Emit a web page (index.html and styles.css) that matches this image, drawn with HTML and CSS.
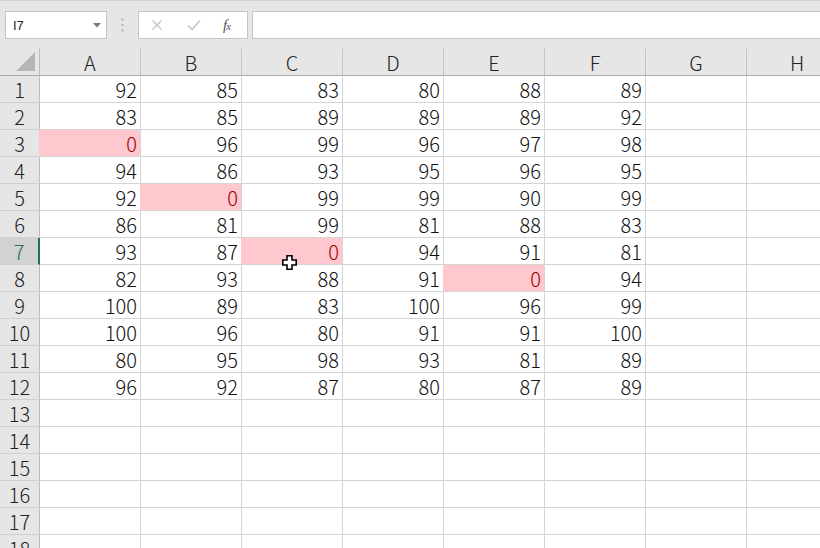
FILE: index.html
```html
<!DOCTYPE html>
<html lang="ja">
<head>
<meta charset="utf-8">
<title>Sheet</title>
<link rel="stylesheet" href="styles.css">
</head>
<body>
<div class="app">
  <div class="toolbar">
    <div class="namebox">
      <span class="namebox-text">I7</span>
      <svg class="namebox-arrow" width="8" height="5" viewBox="0 0 8 5"><path d="M0 0H8L4 4.5Z" fill="#7a7a7a"/></svg>
    </div>
    <div class="dots">
      <svg width="3" height="14" viewBox="0 0 3 14"><rect x="0.5" y="0.5" width="2" height="2" fill="#b0b0b0"/><rect x="0.5" y="6" width="2" height="2" fill="#b0b0b0"/><rect x="0.5" y="11.5" width="2" height="2" fill="#b0b0b0"/></svg>
    </div>
    <div class="fxbox">
      <svg class="fx-icon" width="12" height="12" viewBox="0 0 12 12"><path d="M1.5 1.5L10.5 10.5M10.5 1.5L1.5 10.5" stroke="#c4c4c4" stroke-width="1.4" fill="none"/></svg>
      <svg class="fx-icon" width="14" height="12" viewBox="0 0 14 12"><path d="M1 6.5L5 10.5L13 1.5" stroke="#c4c4c4" stroke-width="1.6" fill="none"/></svg>
      <span class="fx-text"><i>f</i><small>x</small></span>
    </div>
    <div class="formula"></div>
  </div>

  <div class="sheet">
    <div class="grid">
      <div class="corner"><svg width="19" height="19" viewBox="0 0 19 19"><path d="M19 0V19H0Z" fill="#b6b6b6"/></svg></div>
      <div class="colhead">A</div><div class="colhead">B</div><div class="colhead">C</div><div class="colhead">D</div><div class="colhead">E</div><div class="colhead">F</div><div class="colhead">G</div><div class="colhead">H</div>

      <div class="rowhead">1</div><div class="cell">92</div><div class="cell">85</div><div class="cell">83</div><div class="cell">80</div><div class="cell">88</div><div class="cell">89</div><div class="cell"></div><div class="cell"></div>
      <div class="rowhead">2</div><div class="cell">83</div><div class="cell">85</div><div class="cell">89</div><div class="cell">89</div><div class="cell">89</div><div class="cell">92</div><div class="cell"></div><div class="cell"></div>
      <div class="rowhead">3</div><div class="cell bad">0</div><div class="cell">96</div><div class="cell">99</div><div class="cell">96</div><div class="cell">97</div><div class="cell">98</div><div class="cell"></div><div class="cell"></div>
      <div class="rowhead">4</div><div class="cell">94</div><div class="cell">86</div><div class="cell">93</div><div class="cell">95</div><div class="cell">96</div><div class="cell">95</div><div class="cell"></div><div class="cell"></div>
      <div class="rowhead">5</div><div class="cell">92</div><div class="cell bad">0</div><div class="cell">99</div><div class="cell">99</div><div class="cell">90</div><div class="cell">99</div><div class="cell"></div><div class="cell"></div>
      <div class="rowhead">6</div><div class="cell">86</div><div class="cell">81</div><div class="cell">99</div><div class="cell">81</div><div class="cell">88</div><div class="cell">83</div><div class="cell"></div><div class="cell"></div>
      <div class="rowhead active">7</div><div class="cell">93</div><div class="cell">87</div><div class="cell bad">0</div><div class="cell">94</div><div class="cell">91</div><div class="cell">81</div><div class="cell"></div><div class="cell"></div>
      <div class="rowhead">8</div><div class="cell">82</div><div class="cell">93</div><div class="cell">88</div><div class="cell">91</div><div class="cell bad">0</div><div class="cell">94</div><div class="cell"></div><div class="cell"></div>
      <div class="rowhead">9</div><div class="cell">100</div><div class="cell">89</div><div class="cell">83</div><div class="cell">100</div><div class="cell">96</div><div class="cell">99</div><div class="cell"></div><div class="cell"></div>
      <div class="rowhead">10</div><div class="cell">100</div><div class="cell">96</div><div class="cell">80</div><div class="cell">91</div><div class="cell">91</div><div class="cell">100</div><div class="cell"></div><div class="cell"></div>
      <div class="rowhead">11</div><div class="cell">80</div><div class="cell">95</div><div class="cell">98</div><div class="cell">93</div><div class="cell">81</div><div class="cell">89</div><div class="cell"></div><div class="cell"></div>
      <div class="rowhead">12</div><div class="cell">96</div><div class="cell">92</div><div class="cell">87</div><div class="cell">80</div><div class="cell">87</div><div class="cell">89</div><div class="cell"></div><div class="cell"></div>
      <div class="rowhead">13</div><div class="cell"></div><div class="cell"></div><div class="cell"></div><div class="cell"></div><div class="cell"></div><div class="cell"></div><div class="cell"></div><div class="cell"></div>
      <div class="rowhead">14</div><div class="cell"></div><div class="cell"></div><div class="cell"></div><div class="cell"></div><div class="cell"></div><div class="cell"></div><div class="cell"></div><div class="cell"></div>
      <div class="rowhead">15</div><div class="cell"></div><div class="cell"></div><div class="cell"></div><div class="cell"></div><div class="cell"></div><div class="cell"></div><div class="cell"></div><div class="cell"></div>
      <div class="rowhead">16</div><div class="cell"></div><div class="cell"></div><div class="cell"></div><div class="cell"></div><div class="cell"></div><div class="cell"></div><div class="cell"></div><div class="cell"></div>
      <div class="rowhead">17</div><div class="cell"></div><div class="cell"></div><div class="cell"></div><div class="cell"></div><div class="cell"></div><div class="cell"></div><div class="cell"></div><div class="cell"></div>
      <div class="rowhead">18</div><div class="cell"></div><div class="cell"></div><div class="cell"></div><div class="cell"></div><div class="cell"></div><div class="cell"></div><div class="cell"></div><div class="cell"></div>
    </div>
    <svg class="cursor" width="15" height="15" viewBox="0 0 15 15"><path d="M5 0.8H10V5H14.2V10H10V14.2H5V10H0.8V5H5Z" fill="#fff" stroke="#000" stroke-width="1.6" stroke-linejoin="miter"/></svg>
  </div>
</div>
</body>
</html>
```

FILE: styles.css
```css
* { box-sizing: border-box; }
html, body { margin: 0; padding: 0; }
body {
  width: 820px;
  height: 548px;
  overflow: hidden;
  background: #e6e6e6;
  font-family: "Noto Sans CJK JP", "Liberation Sans", sans-serif;
  color: #111;
}
.app { width: 820px; height: 548px; overflow: hidden; }

.toolbar {
  height: 48px;
  display: flex;
  align-items: flex-start;
  padding: 11px 0 0 5px;
  border-top: 1px solid #d2d2d2;
  background: #e6e6e6;
}
.namebox {
  width: 102px;
  height: 28px;
  margin-top: -1px;
  background: #fff;
  border: 1px solid #c6c6c6;
  display: flex;
  align-items: center;
  justify-content: space-between;
  padding: 0 5px 0 7px;
}
.namebox-text {
  font-family: "Liberation Sans", sans-serif;
  font-size: 13px;
  color: #222;
}
.dots {
  width: 31px;
  height: 28px;
  margin-top: -1px;
  display: flex;
  align-items: center;
  justify-content: center;
}
.fxbox {
  width: 110px;
  height: 28px;
  margin-top: -1px;
  background: #fff;
  border: 1px solid #c6c6c6;
  display: flex;
  align-items: center;
  padding: 0 0 0 12px;
}
.fx-icon:first-child { margin-right: 24px; }
.fx-icon:nth-child(2) { margin-right: 22px; }
.fx-text {
  font-family: "Liberation Serif", serif;
  font-size: 15px;
  color: #555;
  font-style: italic;
  letter-spacing: -1px;
}
.fx-text small { font-size: 11px; font-style: italic; }
.formula {
  flex: 1;
  height: 28px;
  margin-top: -1px;
  margin-left: 4px;
  margin-right: -2px;
  background: #fff;
  border: 1px solid #c6c6c6;
}

.sheet { position: relative; }
.grid {
  display: grid;
  grid-template-columns: 40px repeat(8, 101px);
  grid-template-rows: 28px repeat(18, 27px);
  background: #fff;
  font-size: 20px;
  font-weight: 300;
}
.corner {
  background: #e6e6e6;
  border-right: 1px solid #bdbdbd;
  border-bottom: 1px solid #ababab;
  border-top: 1px solid #e6e6e6;
  display: flex;
  align-items: flex-end;
  justify-content: flex-end;
  padding: 0 4px 4px 0;
}
.colhead {
  background: #e6e6e6;
  border-right: 1px solid #c4c4c4;
  border-bottom: 1px solid #ababab;
  border-top: 1px solid #e6e6e6;
  display: flex;
  align-items: center;
  justify-content: center;
  padding-top: 1px;
  color: #222;
  line-height: 1;
}
.rowhead {
  background: #e6e6e6;
  border-right: 1px solid #bdbdbd;
  border-bottom: 1px solid #d0d0d0;
  display: flex;
  align-items: center;
  justify-content: center;
  padding-top: 1px;
  color: #222;
  line-height: 1;
}
.rowhead.active {
  background: #d2d2d2;
  color: #217346;
  border-right: 2px solid #217346;
}
.cell {
  border-right: 1px solid #d4d4d4;
  border-bottom: 1px solid #d4d4d4;
  display: flex;
  align-items: center;
  justify-content: flex-end;
  padding: 2px 3px 0 0;
  line-height: 1;
  color: #111;
}
.cell.bad {
  background: #ffc7ce;
  color: #9c0006;
  box-shadow: -1px 0 0 #ffc7ce;
}
.cursor {
  position: absolute;
  left: 282px;
  top: 207px;
}
```
